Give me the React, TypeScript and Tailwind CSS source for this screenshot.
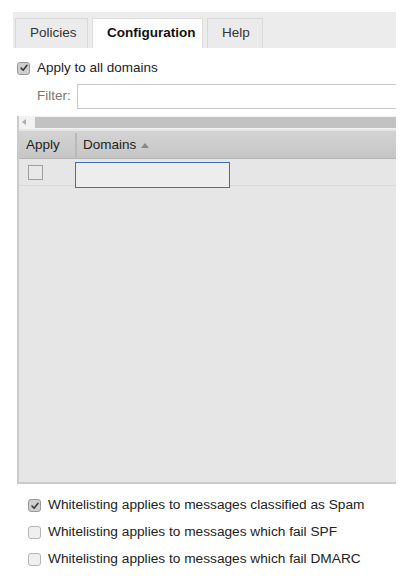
import { useState } from 'react';

const Check = ({ checked, onChange }: { checked: boolean; onChange: () => void }) => (
  <button
    type="button"
    onClick={onChange}
    className={`flex h-[13px] w-[13px] shrink-0 items-center justify-center rounded-[3px] border ${
      checked ? 'border-[#9a9a9a] bg-[#cfcfcf]' : 'border-[#b5b5b5] bg-[#efefef]'
    }`}
    aria-pressed={checked}
  >
    {checked && (
      <svg viewBox="0 0 12 12" className="h-[10px] w-[10px]">
        <path d="M2.5 6.2 L5 8.7 L9.6 2.8" fill="none" stroke="#3a3a3a" strokeWidth="1.9" strokeLinecap="round" strokeLinejoin="round" />
      </svg>
    )}
  </button>
);

const App = () => {
  const [tab, setTab] = useState('Configuration');
  const [allDomains, setAllDomains] = useState(true);
  const [rowApply, setRowApply] = useState(false);
  const [opts, setOpts] = useState([true, false, false]);
  const labels = [
    'Whitelisting applies to messages classified as Spam',
    'Whitelisting applies to messages which fail SPF',
    'Whitelisting applies to messages which fail DMARC',
  ];

  return (
    <div className="h-[581px] w-[407px] overflow-hidden bg-white pt-[12px] text-[13px] text-[#222] [font-family:'Liberation_Sans',Arial,sans-serif]">
      {/* Tabs */}
      <div className="ml-[13px] flex h-[36px] w-[383px] items-end gap-[4px] bg-[#ececec] pl-[2px]">
        {['Policies', 'Configuration', 'Help'].map((t) => (
          <button
            key={t}
            onClick={() => setTab(t)}
            className={`h-[30px] border border-b-0 px-[14px] text-[13.5px] ${
              tab === t ? 'w-[111px] border-[#dedede] bg-white font-bold text-[#111]' : 'border-[#d8d8d8] bg-[#ebebeb] text-[#333]'
            } ${t === 'Policies' ? 'w-[73px]' : ''} ${t === 'Help' ? 'w-[56px]' : ''}`}
          >
            {t}
          </button>
        ))}
      </div>

      {/* Apply to all */}
      <div className="ml-[17px] mt-[13px] flex h-[14px] items-center gap-[7px]">
        <Check checked={allDomains} onChange={() => setAllDomains(!allDomains)} />
        <span className="text-[13.5px] text-[#222]">Apply to all domains</span>
      </div>

      {/* Filter */}
      <div className="mt-[9px] flex items-center pl-[37px]">
        <span className="w-[40px] text-[13.5px] text-[#777]">Filter:</span>
        <div className="h-[25px] w-[319px] border border-r-0 border-[#c9c9c9] bg-white" />
      </div>

      {/* Grid */}
      <div className="ml-[17px] mt-[7px] flex h-[368px] w-[379px] flex-col border-b-2 border-l-2 border-[#cbcbcb] bg-[#e6e6e6]">
        <div className="flex h-[13px] bg-[#f2f2f2] pb-[1px]">
          <div className="flex w-[16px] items-center justify-start pl-[3px]">
            <svg viewBox="0 0 4 6" className="h-[6px] w-[4px]">
              <path d="M4 0 L0 3 L4 6 Z" fill="#aaa" />
            </svg>
          </div>
          <div className="mt-[1px] flex-1 bg-[#c2c2c2]" />
        </div>
        <div className="mt-[2px] flex h-[28px] border-b border-[#b5b5b5] bg-gradient-to-b from-[#d3d3d3] to-[#c6c6c6] pt-[2px] text-[13.5px]">
          <div className="flex w-[58px] items-center border-r-2 border-[#b9b9b9] pl-[7px]">Apply</div>
          <div className="flex items-center gap-[5px] pl-[6px]">
            Domains
            <svg viewBox="0 0 8 5" className="h-[5px] w-[8px]">
              <path d="M0 5 L4 0 L8 5 Z" fill="#888" />
            </svg>
          </div>
        </div>
        <div className="flex h-[27px] items-center border-b border-[#d9d9d9]">
          <div className="flex w-[58px] pl-[9px]">
            <button
              type="button"
              onClick={() => setRowApply(!rowApply)}
              className="h-[15px] w-[15px] border border-[#9e9e9e] bg-[#e8e8e8]"
            />
          </div>
          <input className="ml-[-2px] mt-[5px] h-[26px] w-[155px] border border-[#3d6fb6] bg-[#ededed] outline-none" />
        </div>
      </div>

      {/* Options */}
      <div className="ml-[28px] mt-[15px] flex flex-col gap-[14px]">
        {labels.map((l, i) => (
          <div key={l} className="flex h-[13px] items-center gap-[7px]">
            <Check checked={opts[i]} onChange={() => setOpts(opts.map((o, j) => (j === i ? !o : o)))} />
            <span className="text-[13.7px] text-[#222]">{l}</span>
          </div>
        ))}
      </div>
    </div>
  );
};

export default App;
